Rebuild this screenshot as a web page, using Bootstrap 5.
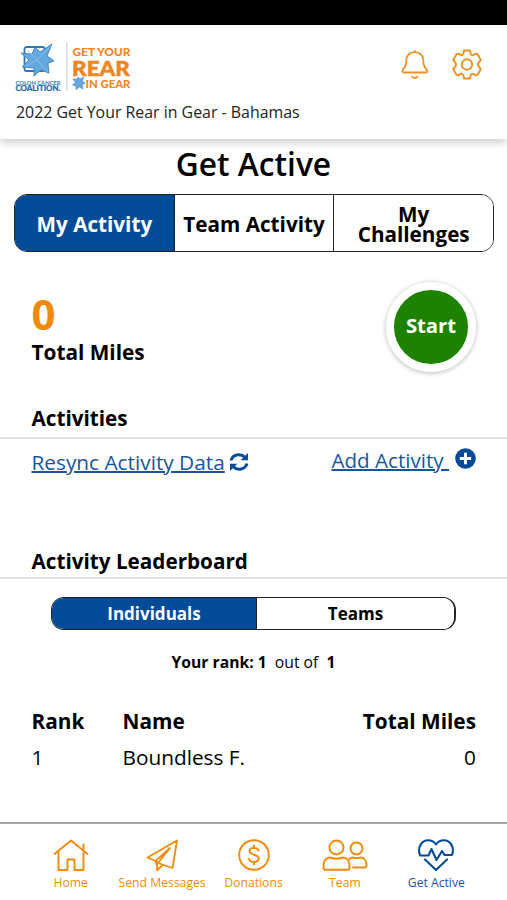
<!DOCTYPE html>
<html lang="en">
<head>
<meta charset="utf-8">
<meta name="viewport" content="width=device-width, initial-scale=1">
<title>Get Active</title>
<link href="https://cdn.jsdelivr.net/npm/bootstrap@5.3.0/dist/css/bootstrap.min.css" rel="stylesheet">
<style>
:root { --blue: #024b98; --orange: #ee8b0c; }
body { font-family: "Open Sans", sans-serif; color: #000; height: 900px; overflow: hidden; font-size: 20.8px; line-height: 28px; }
svg { display: block; flex: none; }
.status-strip { height: 25px; background: #000; }
.app-head { height: 114px; padding: 17px 24px 0 15px; box-shadow: 0 3px 9px rgba(0,0,0,.22); }
.head-icons { gap: 23px; padding-top: 6px; }
.campaign { font-size: 15.9px; line-height: 22px; margin: 8px 0 0 1px; color: #222; }
.page-title { font-size: 31.7px; line-height: 42px; font-weight: 600; height: 55px; padding-top: 4px; margin: 0; }
.seg { border: 1px solid #222; overflow: hidden; }
.seg > * { border: 0; border-radius: 0; background: #fff; color: #000; font-weight: 700; padding: 0; flex: 1 1 0; }
.seg > * + * { border-left: 1px solid #222; }
.seg > .active { background: var(--blue); color: #fff; }
.seg-main { height: 58px; margin: 0 13px 1px 14px; border-radius: 13px; font-size: 20.7px; line-height: 20px; }
.seg-main > * { padding-top: 2px; }
.seg-small { height: 33px; margin: 18px 51px 0; border-radius: 13px; font-size: 17px; line-height: 22px; border-right-width: 2px; }
.seg-small > * { padding-top: 1px; }
.seg-small > .active { flex: 0 0 204px; }
.side { padding-left: 31.5px; padding-right: 31px; }
.stats { height: 147px; padding-top: 29px; }
.miles { color: var(--orange); font-size: 42px; line-height: 48px; font-weight: 700; padding-top: 8px; }
.start-btn { width: 90px; height: 90px; border-radius: 50%; background: #1e8200; border: 8px solid #fff; color: #fff; font-weight: 700; font-size: 20.3px; padding: 0 0 4px; box-shadow: 0 1px 4px 1px rgba(0,0,0,.2); }
.sect { font-size: 20.7px; line-height: 28px; font-weight: 700; border-bottom: 2px solid #e2e2e2; margin: 0; }
.sect-a { height: 39px; padding-top: 4px; }
.sect-b { height: 32px; }
.links { height: 108px; padding-top: 9px; }
.links a { color: #17559d; text-decoration-thickness: 1.5px; }
.add-link { white-space: pre; margin-top: -2px; font-size: 20.6px; }
.rank-line { font-size: 15.7px; line-height: 22px; margin-top: 21px; white-space: pre; }
.board { margin-top: 34px; }
.board-row { height: 36px; display: grid; grid-template-columns: 91px 1fr auto; }
.app-nav { height: 78px; border-top: 2px solid #a3a3a3; padding: 0 25px; margin-top: auto; }
.app-nav a { width: 91.5px; color: var(--orange); font-size: 12.2px; line-height: 16px; padding-top: 15px; white-space: nowrap; text-decoration: none; }
.app-nav a.current { color: #17559d; }
.app-nav svg { margin-bottom: 4px; }
</style>
<script src="https://cdn.jsdelivr.net/npm/bootstrap@5.3.0/dist/js/bootstrap.bundle.min.js"></script>
</head>
<body class="d-flex flex-column bg-white">
<div class="status-strip"></div>
<header class="app-head bg-white">
  <div class="d-flex justify-content-between">
    <svg width="118" height="51" viewBox="0 0 118 51" font-family="Lato, sans-serif" font-weight="900">
      <rect x="9.500" y="5" width="20" height="24" rx="2" fill="none" stroke="#2f77b4" stroke-width="1.800"/>
      <path d="M37 2L32 14L39 19L33 21L34 31L26 28L19 34L19 26L7 25L14 18L6 11L17 12L20 5L25 10Z" fill="#64a9dd" stroke="#3d80b8" stroke-width=".9"/>
      <path d="M12 8L22 18L36 4M22 18L33 30M22 18L11 24" fill="none" stroke="#8bc5ee" stroke-width=".8"/>
      <text x="0.5" y="42.600" font-size="5" fill="#3f83b6" textLength="45" lengthAdjust="spacingAndGlyphs">COLON CANCER</text>
      <text x="0.5" y="49.300" font-size="7.300" fill="#246ca5" stroke="#246ca5" stroke-width=".2" textLength="45" lengthAdjust="spacingAndGlyphs">COALITION.</text>
      <path d="M51.8 1V49" stroke="#cbdae3" stroke-width="1.4"/>
      <g fill="#ee8622">
        <text x="57.5" y="13.800" font-size="10.600" textLength="58" lengthAdjust="spacingAndGlyphs">GET YOUR</text>
        <text x="57" y="33.700" font-size="21" stroke="#ee8622" stroke-width=".5" textLength="58" lengthAdjust="spacingAndGlyphs">REAR</text>
        <text x="70.5" y="45.500" font-size="10.600" textLength="45" lengthAdjust="spacingAndGlyphs">IN GEAR</text>
      </g>
      <path d="M69 35L67 39L70 41L67 43L68 47L64.500 45L61 47.500L61 44L57.500 43L60.500 40.500L58 37L61.500 37.500L63 35L65 37Z" fill="#64a9dd" stroke="#3d80b8" stroke-width=".6"/>
    </svg>
    <div class="d-flex head-icons">
      <svg width="28" height="32" viewBox="0 0 28 32" fill="none" stroke="#ee9224" stroke-width="1.8" stroke-linecap="round" stroke-linejoin="round">
        <path d="M15 3V4.200M15 4.200C9.500 4.200 6.500 8 6.500 12.500C6.500 17 5.500 19 3.300 21.500C2 23.200 2.500 24.500 4.500 24.500H25.500C27.500 24.500 28 23.200 26.700 21.500C24.500 19 23.500 17 23.500 12.500C23.500 8 20.500 4.200 15 4.200M12.300 28.500C13 30.700 17 30.700 17.700 28.500" transform="translate(-.2)"/>
      </svg>
      <svg width="32" height="32" viewBox="0 0 32 32" fill="none" stroke="#ee9224" stroke-width="1.9" stroke-linejoin="round">
        <path d="M13 2.500H19L19.500 5.200Q20 7.200 22 7.200Q23 7.200 24 5.800L26.600 6.300L29.800 12L28 14Q26 16.500 28 19L29.800 21L26.600 26.700L24 27.200Q23 25.800 22 25.800Q20 25.800 19.500 27.800L19 30.500H13L12.500 27.800Q12 25.800 10 25.800Q9 25.800 8 27.200L5.400 26.700L2.200 21L4 19Q6 16.500 4 14L2.200 12L5.400 6.300L8 5.800Q9 7.200 10 7.200Q12 7.200 12.500 5.200Z"/>
        <circle cx="16" cy="16.500" r="5.200"/>
      </svg>
    </div>
  </div>
  <div class="campaign">2022 Get Your Rear in Gear - Bahamas</div>
</header>

<h1 class="page-title text-center">Get Active</h1>
<div class="seg seg-main d-flex">
  <button class="active">My Activity</button>
  <button>Team Activity</button>
  <button>My<br>Challenges</button>
</div>

<section class="stats side d-flex justify-content-between">
  <div>
    <div class="miles">0</div>
    <div class="fw-bold">Total Miles</div>
  </div>
  <button class="start-btn">Start</button>
</section>

<h2 class="sect sect-a side">Activities</h2>
<div class="links side d-flex justify-content-between">
  <div class="d-flex align-items-start">
    <a href="#">Resync Activity Data</a>
    <svg class="mt-1 ms-1" width="20" height="20" viewBox="0 0 20 20" fill="none" stroke="#024b98" stroke-width="3">
      <path d="M2 8.500C3.500 2.500 11.500 0.800 16 5.500M18 11.500C16.500 17.500 8.500 19.200 4 14.500"/>
      <path d="M19 1V8.300H11.700ZM1 19V11.700H8.300Z" fill="#024b98" stroke="none"/>
    </svg>
  </div>
  <div class="d-flex align-items-start">
    <a href="#" class="add-link">Add Activity </a>
    <svg style="margin-left:6px" width="21" height="21" viewBox="0 0 21 21"><circle cx="10.500" cy="10.500" r="10.300" fill="#024b98"/><path d="M10.500 4.800V16.200M4.800 10.500H16.200" stroke="#fff" stroke-width="3"/></svg>
  </div>
</div>

<h2 class="sect sect-b side">Activity Leaderboard</h2>
<div class="seg seg-small d-flex">
  <button class="active">Individuals</button>
  <button>Teams</button>
</div>
<div class="rank-line text-center"><b>Your rank: 1</b>  out of  <b>1</b></div>

<div class="board side">
  <div class="board-row fw-bold"><span>Rank</span><span>Name</span><span>Total Miles</span></div>
  <div class="board-row"><span>1</span><span>Boundless F.</span><span>0</span></div>
</div>

<nav class="app-nav d-flex">
  <a href="#" class="d-flex flex-column align-items-center">
    <svg width="36" height="32" viewBox="0 0 36 32" fill="none" stroke="currentColor" stroke-width="1.900" stroke-linecap="round" stroke-linejoin="round"><path d="M1.500 15L18 1.500L34.500 15M5.500 12.500V31H14.500V20.500H21.500V31H30.500V12.500M30.500 11V5.500"/></svg>
    Home</a>
  <a href="#" class="d-flex flex-column align-items-center">
    <svg width="32" height="32" viewBox="0 0 32 32" fill="none" stroke="currentColor" stroke-width="1.800" stroke-linecap="round" stroke-linejoin="round"><path d="M31 1.500L1.500 18.500L9.500 22L24 9L12 24L26.500 29ZM11 23V31L16.500 26.500M9.500 22L12 31"/></svg>
    Send Messages</a>
  <a href="#" class="d-flex flex-column align-items-center">
    <svg width="32" height="32" viewBox="0 0 32 32" fill="none" stroke="currentColor" stroke-width="1.900" stroke-linecap="round"><circle cx="16" cy="16" r="14.800"/><path d="M20.500 11.500C19.500 7.800 11.500 8 11.500 12C11.500 16.500 20.800 15 20.800 19.500C20.800 24 12 24.200 11 20M16 6.500V9M16 23V25.500"/></svg>
    Donations</a>
  <a href="#" class="d-flex flex-column align-items-center">
    <svg width="46" height="32" viewBox="0 0 46 32" fill="none" stroke="currentColor" stroke-width="1.900" stroke-linecap="round" stroke-linejoin="round"><circle cx="14.500" cy="8.500" r="7"/><circle cx="34.500" cy="9.500" r="6"/><path d="M8 18.500C4 18.500 1.500 22 1.500 27V29Q1.500 30.800 3.500 30.800H25.500Q27.500 30.800 27.500 29V27C27.500 22 25 18.500 21 18.500C17 20 12 20 8 18.500ZM27.500 20C28.500 19 29.500 18.500 31 18.500C33.500 19.300 36 19.300 38.500 18.500C42 18.500 44.500 21.500 44.500 26Q44.500 28.500 42.500 28.500H31"/></svg>
    Team</a>
  <a href="#" class="current d-flex flex-column align-items-center">
    <svg width="36" height="32" viewBox="0 0 36 32" fill="none" stroke="#024b98" stroke-width="2.100" stroke-linecap="round" stroke-linejoin="round"><path d="M2 16C-1 8 4 1.300 10 1.300C13.500 1.300 16.500 3 18 5.500C19.500 3 22.500 1.300 26 1.300C32 1.300 37 8 34 16H26.500L24 12L18.500 21L13.500 10L10.500 16.500H2M7 20.500L18 31L29 20.500"/></svg>
    Get Active</a>
</nav>
</body>
</html>
